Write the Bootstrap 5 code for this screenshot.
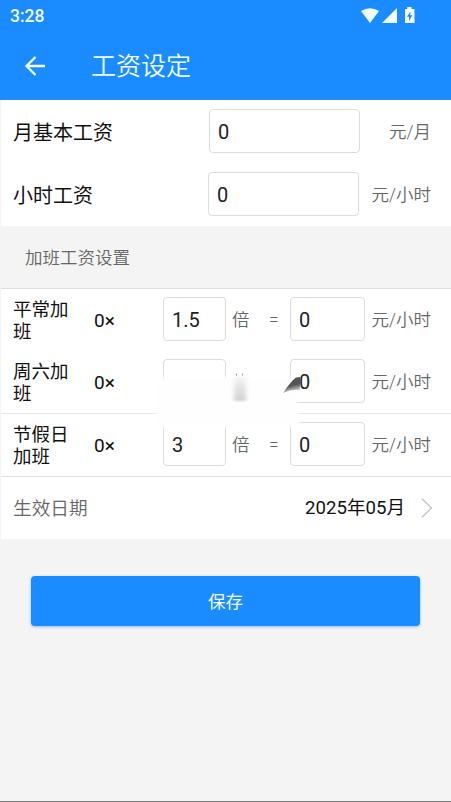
<!DOCTYPE html>
<html lang="zh-CN">
<head>
<meta charset="utf-8">
<meta name="viewport" content="width=device-width, initial-scale=1">
<title>工资设定</title>
<link href="https://cdn.jsdelivr.net/npm/bootstrap@5.3.0/dist/css/bootstrap.min.css" rel="stylesheet">
<style>
body{font-family:Roboto,"Noto Sans CJK SC",sans-serif;background:#f4f4f4;color:#111;height:802px;overflow:hidden;border-bottom:1px solid #777}
.app-head{background:#1b8cff;height:100px;color:#f0ffff;border-bottom:1px solid #3488e6}
.status-line{height:31px;padding:0 36px 0 10px;font-size:17.5px;font-weight:500}
.clock{padding-top:1px}
.title-line{height:69px;padding-left:24px}
.page-title{font-size:25px;font-weight:350;margin-left:45px;line-height:1;padding-top:2px}
.sheet{background:#fff;margin-left:1px}
.line{height:63px;padding:0 20px 0 12px}
.name{font-size:20px;font-weight:400;line-height:1;padding-top:2px}
.unit{font-size:17.5px;font-weight:350;color:#666;line-height:1;white-space:nowrap;padding-top:2px}
.unit-lg{width:64px}
.unit-month{width:63px}
.form-control.field{height:44px;border:1px solid #dcdcdc;border-radius:4px;padding:2px 8px 0;font-size:20px;color:#222;background:#fff;margin-bottom:2px}
.field-lg{width:151px}
.field-md{width:75px}
.form-control.field-sm{width:63px}
.caption{height:62px;padding:2px 0 0 25px;font-size:17.5px;font-weight:350;color:#666}
.overtime{border-top:1px solid #ddd;border-bottom:1px solid #ddd}
.overtime .line{height:62px}
.overtime .line-last{border-top:1px solid #e6e6e6;height:63px}
.kind{font-size:18.5px;line-height:22px;width:62px;margin-right:19px;padding-top:1px}
.rate{font-size:19px;width:69px;line-height:1}
.times{width:37px;margin-left:6px}
.equals{width:21px}
.smudge{left:151px;top:80px;pointer-events:none}
.date-line{height:62px;padding:0 18px 0 12px}
.date-name{font-size:18.7px;font-weight:350;color:#666;padding-top:2px}
.date-value{font-size:18.6px;color:#111;padding-top:2px}
.btn.save{margin:37px 31px 0;height:50px;width:389px;background:#1b8cff;border:0;border-radius:4px;color:#f0ffff;font-size:17.5px;padding-top:8px;box-shadow:0 1px 3px rgba(60,140,220,.55)}
</style>
</head>
<body>
<header class="app-head">
  <div class="status-line d-flex align-items-center justify-content-between">
    <span class="clock">3:28</span>
    <svg width="56" height="18" viewBox="0 0 56 18" fill="#f4ffff">
      <path d="M2 4Q11-1.700 20 4L11 16Z"/>
      <path d="M38 1V16H23Z"/>
      <path d="M46 2h2.300V0h4.200v2H55.500V16H46Z"/>
      <path d="M51.500 4.500 48 9.700h2v4.200l3.300-5.600h-2.100Z" fill="#1b8cff"/>
    </svg>
  </div>
  <div class="title-line d-flex align-items-center">
    <svg width="22" height="22" viewBox="0 0 22 22" fill="none" stroke="#f0ffff" stroke-width="2.300"><path d="M21 11H2.500M11.500 2 2.500 11l9 9"/></svg>
    <h1 class="page-title mb-0">工资设定</h1>
  </div>
</header>
<main>
  <section class="sheet">
    <div class="line d-flex align-items-center">
      <label class="name me-auto" for="monthly">月基本工资</label>
      <input class="form-control field field-lg flex-shrink-0" id="monthly" value="0">
      <span class="unit unit-month text-end ms-2">元/月</span>
    </div>
    <div class="line d-flex align-items-center">
      <label class="name me-auto" for="hourly">小时工资</label>
      <input class="form-control field field-lg flex-shrink-0" id="hourly" value="0">
      <span class="unit unit-lg text-end ms-2">元/小时</span>
    </div>
  </section>
  <div class="caption d-flex align-items-center">加班工资设置</div>
  <section class="sheet overtime position-relative">
    <div class="line d-flex align-items-center">
      <span class="kind">平常加班</span><span class="rate">0×</span>
      <input class="form-control field field-sm" value="1.5" aria-label="平常加班倍数">
      <span class="unit times">倍</span><span class="unit equals">=</span>
      <input class="form-control field field-md" value="0" aria-label="平常加班工资">
      <span class="unit ms-auto">元/小时</span>
    </div>
    <div class="line d-flex align-items-center">
      <span class="kind">周六加班</span><span class="rate">0×</span>
      <input class="form-control field field-sm" value="" aria-label="周六加班倍数">
      <span class="unit times"></span><span class="unit equals"></span>
      <input class="form-control field field-md" value="0" aria-label="周六加班工资">
      <span class="unit ms-auto">元/小时</span>
    </div>
    <div class="line line-last d-flex align-items-center">
      <span class="kind">节假日加班</span><span class="rate">0×</span>
      <input class="form-control field field-sm" value="3" aria-label="节假日加班倍数">
      <span class="unit times">倍</span><span class="unit equals">=</span>
      <input class="form-control field field-md" value="0" aria-label="节假日加班工资">
      <span class="unit ms-auto">元/小时</span>
    </div>
    <svg class="smudge position-absolute" width="160" height="66" viewBox="152 369 160 66">
      <defs>
        <filter id="soft" x="-20%" y="-20%" width="140%" height="140%"><feGaussianBlur stdDeviation="2"/></filter>
        <filter id="haze" x="-60%" y="-40%" width="220%" height="180%"><feGaussianBlur stdDeviation="2 1"/></filter>
        <filter id="edge" x="-20%" y="-20%" width="140%" height="140%"><feGaussianBlur stdDeviation=".6"/></filter>
        <linearGradient id="wedge" gradientUnits="userSpaceOnUse" x1="292" y1="377" x2="296" y2="393"><stop offset="0" stop-color="#555"/><stop offset=".5" stop-color="#555"/><stop offset="1" stop-color="#fff"/></linearGradient>
        <linearGradient id="drip" x1="0" y1="0" x2="0" y2="1"><stop offset="0" stop-color="#f4f4f4"/><stop offset="1" stop-color="#d0d0d0"/></linearGradient>
      </defs>
      <path d="M156 377H297V400L300 427H156Z" fill="#fefefe" filter="url(#soft)"/>
      <path d="M234 377H246V401H234Z" fill="url(#drip)" filter="url(#haze)"/>
      <path d="M236.500 373.500v2M242.500 373.500v2" stroke="#999"/>
      <path d="M283 393Q291 381 296 377.500L300 377V390Q291 389 283 393Z" fill="url(#wedge)" filter="url(#edge)"/>
    </svg>
  </section>
  <section class="sheet date-line d-flex align-items-center">
    <span class="date-name me-auto">生效日期</span>
    <span class="date-value">2025年05月</span>
    <svg class="ms-3" width="12" height="20" viewBox="0 0 12 20" fill="none" stroke="#c4c4c4" stroke-width="1.300"><path d="M1 .8 10.500 10 1 19.200"/></svg>
  </section>
  <button class="btn save d-block" type="button">保存</button>
</main>
<script src="https://cdn.jsdelivr.net/npm/bootstrap@5.3.0/dist/js/bootstrap.bundle.min.js"></script>
</body>
</html>
